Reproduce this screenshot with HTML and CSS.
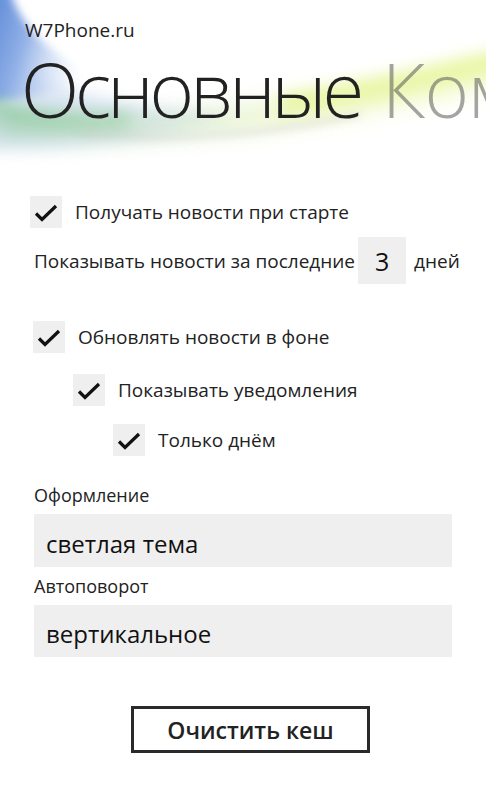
FILE: index.html
```html
<!DOCTYPE html>
<html lang="ru">
<head>
<meta charset="utf-8">
<link rel="stylesheet" href="styles.css">
</head>
<body>
<div class="page">
  <header class="header">
    <svg class="swirl" width="486" height="200" viewBox="0 0 486 200" aria-hidden="true">
      <defs>
        <filter id="b4" x="-30%" y="-50%" width="160%" height="200%"><feGaussianBlur stdDeviation="4"/></filter>
        <filter id="b8" x="-30%" y="-80%" width="160%" height="260%"><feGaussianBlur stdDeviation="8"/></filter>
        <filter id="b12" x="-30%" y="-100%" width="160%" height="300%"><feGaussianBlur stdDeviation="12"/></filter>
        <linearGradient id="gband" x1="0" y1="0" x2="1" y2="0">
          <stop offset="0" stop-color="#7fc48f"/>
          <stop offset="0.35" stop-color="#cfe8c2"/>
          <stop offset="0.65" stop-color="#e6f4a6"/>
          <stop offset="1" stop-color="#e9f6a0"/>
        </linearGradient>
        <linearGradient id="gblue" x1="0" y1="0" x2="1" y2="0.3">
          <stop offset="0" stop-color="#4f7fd3"/>
          <stop offset="0.45" stop-color="#8eaee6"/>
          <stop offset="1" stop-color="#d9e4f6" stop-opacity="0"/>
        </linearGradient>
      </defs>
      <path d="M-30 50 Q70 105 230 116 Q120 150 -30 150 Z" fill="#cfdcf1" opacity="0.7" filter="url(#b8)"/>
      <path d="M-20 -10 L10 -10 Q22 40 100 80 Q40 98 -20 104 Z" fill="url(#gblue)" filter="url(#b4)"/>
      <path d="M-20 102 Q40 128 130 120" stroke="#86c795" stroke-width="12" fill="none" opacity="0.8" filter="url(#b8)"/>
      <path d="M-10 122 Q200 145 500 70" stroke="url(#gband)" stroke-width="20" fill="none" opacity="0.75" filter="url(#b12)"/>
      <path d="M280 105 Q400 85 500 60" stroke="#e3f48c" stroke-width="18" fill="none" opacity="0.75" filter="url(#b8)"/>
      <path d="M80 134 Q220 146 360 114" stroke="#c6c8c2" stroke-width="4" fill="none" opacity="0.6" filter="url(#b4)"/>
    </svg>
    <div class="app-title">W7Phone.ru</div>
    <h1 class="page-title">Основные <span class="next">Ком</span></h1>
  </header>

  <main class="content">
    <label class="check first">
      <span class="box"><svg width="32" height="32" viewBox="0 0 32 32"><path d="M6 17.5 L12 23.5 L26 10" /></svg></span>
      <span class="check-text">Получать новости при старте</span>
    </label>

    <div class="days-row">
      <span>Показывать новости за последние</span>
      <span class="num">3</span>
      <span>дней</span>
    </div>

    <label class="check lvl1">
      <span class="box"><svg width="32" height="32" viewBox="0 0 32 32"><path d="M6 17.5 L12 23.5 L26 10" /></svg></span>
      <span class="check-text">Обновлять новости в фоне</span>
    </label>
    <label class="check lvl2">
      <span class="box"><svg width="32" height="32" viewBox="0 0 32 32"><path d="M6 17.5 L12 23.5 L26 10" /></svg></span>
      <span class="check-text">Показывать уведомления</span>
    </label>
    <label class="check lvl3">
      <span class="box"><svg width="32" height="32" viewBox="0 0 32 32"><path d="M6 17.5 L12 23.5 L26 10" /></svg></span>
      <span class="check-text">Только днём</span>
    </label>

    <div class="field">
      <div class="field-label">Оформление</div>
      <div class="select">светлая тема</div>
    </div>
    <div class="field second">
      <div class="field-label">Автоповорот</div>
      <div class="select">вертикальное</div>
    </div>

    <button class="btn">Очистить кеш</button>
  </main>
</div>
</body>
</html>
```

FILE: styles.css
```css
* { box-sizing: border-box; }
html, body { margin: 0; padding: 0; background: #fff; }
body {
  width: 486px;
  height: 810px;
  overflow: hidden;
  font-family: "Open Sans", "Noto Sans", sans-serif;
  color: #222;
}
.page { display: flex; flex-direction: column; }

.header {
  position: relative;
  height: 186px;
  overflow: hidden;
  padding: 18px 0 0 25px;
}
.swirl { position: absolute; left: 0; top: 0; z-index: 0; }
.app-title {
  position: relative;
  font-size: 19px;
  line-height: 24px;
  color: #222;
}
.page-title {
  position: relative;
  margin: 9px 0 0 -4px;
  font-size: 76px;
  font-weight: 300;
  line-height: 76px;
  white-space: nowrap;
  color: #222;
  letter-spacing: -4px;
}
.page-title .next {
  color: rgba(90, 90, 90, 0.55);
  letter-spacing: -1px;
  margin-left: 6px;
}

.content {
  display: flex;
  flex-direction: column;
  align-items: flex-start;
  padding: 10px 0 0 30px;
}

.check {
  display: flex;
  align-items: center;
  gap: 13px;
  font-size: 19px;
  line-height: 32px;
  color: #222;
}
.box {
  width: 32px;
  height: 32px;
  background: #efefef;
  display: flex;
}
.box path { fill: none; stroke: #111; stroke-width: 3.2; }
.check.first { margin-left: 0; }
.check.lvl1 { margin-left: 3px; margin-top: 37px; }
.check.lvl2 { margin-left: 43px; margin-top: 21px; }
.check.lvl3 { margin-left: 83px; margin-top: 18px; }

.days-row {
  display: flex;
  align-items: center;
  margin-top: 9px;
  margin-left: 4px;
  font-size: 19px;
  color: #222;
}
.num {
  width: 48px;
  height: 47px;
  background: #efefef;
  margin: 0 8px 0 3px;
  display: flex;
  align-items: center;
  justify-content: center;
  font-size: 25px;
  color: #111;
}

.field { display: flex; flex-direction: column; margin-left: 4px; margin-top: 26px; }
.field.second { margin-top: 6px; }
.field-label { font-size: 18px; line-height: 26px; color: #222; }
.select {
  width: 418px;
  height: 53px;
  margin-top: 6px;
  background: #efefef;
  padding: 5px 0 0 12px;
  display: flex;
  align-items: center;
  font-size: 24px;
  color: #111;
}
.field.second .select { height: 52px; }

.btn {
  margin: 49px 0 0 101px;
  width: 239px;
  height: 47px;
  border: 3px solid #2a2a2a;
  background: #fff;
  font-family: "Open Sans", "Noto Sans", sans-serif;
  font-weight: 600;
  font-size: 23px;
  color: #222;
  padding: 0;
}
```
